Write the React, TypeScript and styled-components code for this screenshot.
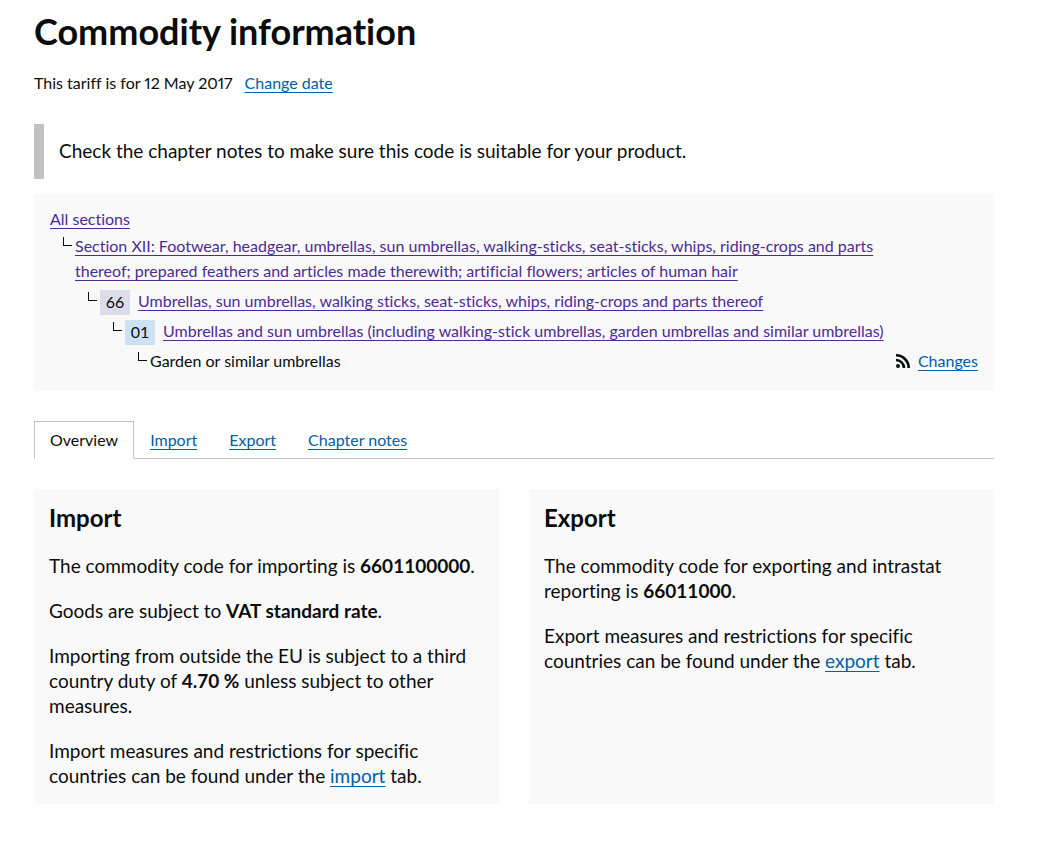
import React from "react";
import styled, { createGlobalStyle } from "styled-components";

const GlobalStyle = createGlobalStyle`
  * { box-sizing: border-box; }
  body {
    margin: 0;
    background: #fff;
    color: #0b0c0c;
    font-family: Lato, "Liberation Sans", sans-serif;
    font-size: 16px;
    line-height: 25px;
    font-variant-ligatures: none;
  }
`;

const Page = styled.main`
  padding: 11px 43px 40px 34px;
`;

const Title = styled.h1`
  margin: 0;
  font-size: 36px;
  line-height: 40px;
  font-weight: 700;
`;

const DateLine = styled.p`
  display: flex;
  gap: 12px;
  margin: 19px 0 29px;
  font-variant-numeric: proportional-nums;
`;

const Link = styled.a<{ $visited?: boolean }>`
  color: ${(p) => (p.$visited ? "#4c2c92" : "#005ea5")};
  text-decoration: underline;
  text-decoration-thickness: 1px;
  text-decoration-skip-ink: none;
  text-underline-offset: 3px;
`;

const Inset = styled.p`
  margin: 0 0 15px;
  padding: 14px 15px 16px;
  border-left: 10px solid #bfc1c3;
  font-size: 19px;
`;

const Breadcrumb = styled.nav`
  display: flex;
  align-items: flex-end;
  justify-content: space-between;
  gap: 8px;
  margin-bottom: 30px;
  padding: 12px 16px 18px;
  background: #f9f9f9;
`;

const Trail = styled.ul`
  margin: 0;
  padding: 0;
  list-style: none;
`;

const Branch = styled(Trail)`
  padding-left: 25px;
`;

const Step = styled.div<{ $first?: boolean }>`
  display: flex;
  position: relative;
  gap: 8px;
  margin-top: ${(p) => (p.$first ? 2 : 5)}px;

  &::before {
    content: "";
    position: absolute;
    left: -12px;
    top: 4px;
    width: 8px;
    height: 8px;
    border-left: 1px solid #0b0c0c;
    border-bottom: 1px solid #0b0c0c;
  }
`;

const Code = styled.span<{ $tone: string }>`
  flex: none;
  width: 30px;
  height: 25px;
  margin: 2px 0 -2px;
  background: ${(p) => p.$tone};
  line-height: 23px;
  text-align: center;
`;

const Feed = styled.span`
  display: flex;
  flex: none;
  align-items: center;
  gap: 8px;
`;

const Tabs = styled.ul`
  display: flex;
  margin: 0 0 30px;
  padding: 0;
  border-bottom: 1px solid #bfc1c3;
  list-style: none;
`;

const Tab = styled.li<{ $active?: boolean }>`
  margin-bottom: -1px;
  padding: 5px 15px 6px;
  border: 1px solid ${(p) => (p.$active ? "#bfc1c3" : "transparent")};
  border-bottom-color: ${(p) => (p.$active ? "#fff" : "transparent")};
`;

const Cards = styled.div`
  display: grid;
  grid-template-columns: 1fr 1fr;
  gap: 30px;
`;

const Card = styled.section`
  padding: 14px 15px 16px;
  background: #f9f9f9;
  font-size: 19px;
`;

const CardTitle = styled.h2`
  margin: 0;
  font-size: 24px;
  line-height: 30px;
  font-weight: 700;
`;

const Text = styled.p`
  margin: 20px 0 0;
`;

const FeedIcon = () => (
  <svg width="14" height="14" viewBox="0 0 14 14" fill="none" aria-hidden="true">
    <circle cx="2" cy="12" r="2" fill="#0b0c0c" />
    <path d="M0 6A8 8 0 0 1 8 14M0 1.3A12.7 12.7 0 0 1 12.7 14" stroke="#0b0c0c" strokeWidth="2.6" />
  </svg>
);

export default function App() {
  return (
    <Page>
      <GlobalStyle />
      <Title>Commodity information</Title>
      <DateLine>
        <span>This tariff is for 12 May 2017</span>
        <Link href="#date">Change date</Link>
      </DateLine>
      <Inset>Check the chapter notes to make sure this code is suitable for your product.</Inset>

      <Breadcrumb aria-label="Commodity hierarchy">
        <Trail>
          <li>
            <Link $visited href="#sections">All sections</Link>
            <Branch>
              <li>
                <Step $first>
                  <Link $visited href="#section-12">
                    Section XII: Footwear, headgear, umbrellas, sun umbrellas, walking-sticks, seat-sticks, whips,
                    riding-crops and parts thereof; prepared feathers and articles made therewith; artificial flowers;
                    articles of human hair
                  </Link>
                </Step>
                <Branch>
                  <li>
                    <Step>
                      <Code $tone="#dcdcea">66</Code>
                      <Link $visited href="#chapter-66">
                        Umbrellas, sun umbrellas, walking sticks, seat-sticks, whips, riding-crops and parts thereof
                      </Link>
                    </Step>
                    <Branch>
                      <li>
                        <Step>
                          <Code $tone="#cce2f2">01</Code>
                          <Link $visited href="#heading-6601">
                            Umbrellas and sun umbrellas (including walking-stick umbrellas, garden umbrellas and similar
                            umbrellas)
                          </Link>
                        </Step>
                        <Branch>
                          <li>
                            <Step>Garden or similar umbrellas</Step>
                          </li>
                        </Branch>
                      </li>
                    </Branch>
                  </li>
                </Branch>
              </li>
            </Branch>
          </li>
        </Trail>
        <Feed>
          <FeedIcon />
          <Link href="#changes">Changes</Link>
        </Feed>
      </Breadcrumb>

      <Tabs>
        <Tab $active>Overview</Tab>
        <Tab><Link href="#import">Import</Link></Tab>
        <Tab><Link href="#export">Export</Link></Tab>
        <Tab><Link href="#notes">Chapter notes</Link></Tab>
      </Tabs>

      <Cards>
        <Card>
          <CardTitle>Import</CardTitle>
          <Text>The commodity code for importing is <b>6601100000</b>.</Text>
          <Text>Goods are subject to <b>VAT standard rate</b>.</Text>
          <Text>
            Importing from outside the EU is subject to a third country duty of <b>4.70 %</b> unless subject to other
            measures.
          </Text>
          <Text>
            Import measures and restrictions for specific countries can be found under the{" "}
            <Link href="#import">import</Link> tab.
          </Text>
        </Card>
        <Card>
          <CardTitle>Export</CardTitle>
          <Text>
            The commodity code for exporting and intrastat reporting is <b>66011000</b>.
          </Text>
          <Text>
            Export measures and restrictions for specific countries can be found under the{" "}
            <Link href="#export">export</Link> tab.
          </Text>
        </Card>
      </Cards>
    </Page>
  );
}
